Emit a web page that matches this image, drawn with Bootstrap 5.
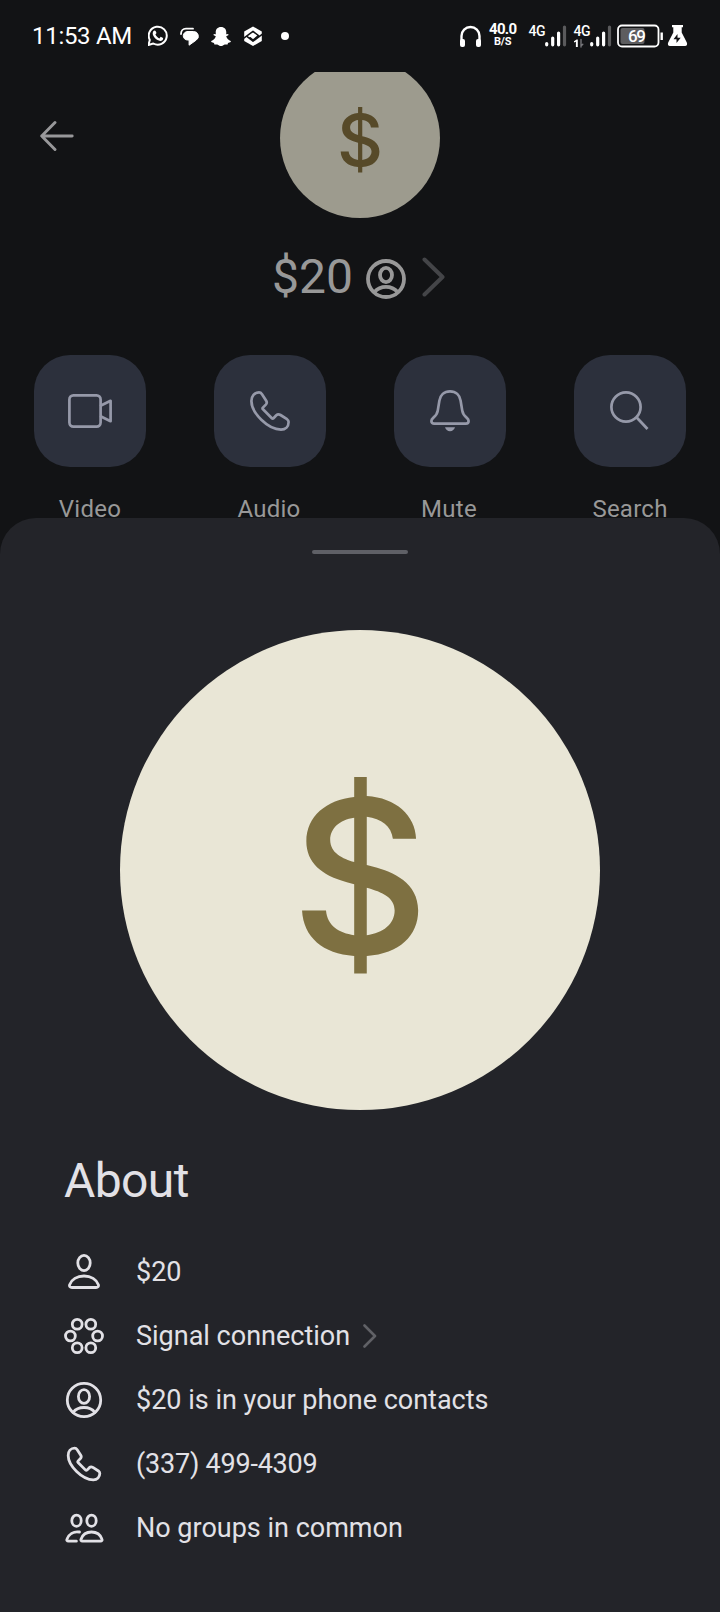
<!DOCTYPE html>
<html lang="en" data-bs-theme="dark">
<head>
<meta charset="utf-8">
<meta name="viewport" content="width=device-width, initial-scale=1">
<title>Contact details</title>
<link href="https://cdn.jsdelivr.net/npm/bootstrap@5.3.0/dist/css/bootstrap.min.css" rel="stylesheet">
<style>
  body { font-family: Roboto, "Noto Sans", sans-serif; background: #121315; width: 720px; height: 1612px; overflow: hidden; }
  svg { display: block; flex: none; fill: none; stroke-linecap: round; stroke-linejoin: round; }
  .statusbar { height: 72px; color: #fff; padding: 0 31px 0 32px; }
  .clock { font-size: 24px; line-height: 28px; letter-spacing: -.3px; width: 116px; white-space: nowrap; }
  .profile { height: 446px; color: #989898; }
  .topbar { height: 146px; padding-left: 40px; overflow: hidden; }
  .topbar .side { width: 240px; padding-top: 48px; }
  .avatar-sm { width: 160px; height: 160px; margin-top: -14px; }
  .contact-name { height: 60px; margin-top: 29px; font-size: 48px; line-height: 60px; padding-left: 272px; }
  .name-icon { margin: 4px 0 0 13px; }
  .name-chev { margin-left: 16px; }
  .actions { margin-top: 48px; padding: 0 34px; }
  .action { width: 112px; }
  .tile { width: 112px; height: 112px; border-radius: 36px; background: #2c303c; }
  .tile svg { stroke: #9699a9; stroke-width: 2.7; }
  .action-label { font-size: 24px; line-height: 24px; letter-spacing: .25px; margin-top: 30px; white-space: nowrap; }
  .action-label.nudge { margin-left: -2px; }
  .sheet { height: 1094px; background: #232429; border-radius: 36px 36px 0 0; color: #e2e1e6; position: relative; }
  .handle { width: 96px; height: 4px; border-radius: 2px; background: #5f6066; margin-top: 32px; }
  .avatar-lg { width: 480px; height: 480px; margin-top: 76px; }
  .about-title { font-size: 48px; line-height: 60px; font-weight: 400; letter-spacing: -.6px; color: #e2e1e6; margin: 41px 0 0 64px; }
  .facts { margin-top: 29px; padding-left: 64px; }
  .fact { height: 64px; font-size: 27px; }
  .fact-icon { width: 72px; }
  .fact-icon svg { stroke: #e2e1e6; stroke-width: 2.8; overflow: visible; }
  .fact-chev { margin-left: 13px; }
  .phone-number { letter-spacing: -.22px; }
</style>
</head>
<body>
<header class="statusbar d-flex align-items-center">
  <span class="clock">11:53 AM</span>
  <svg width="150" height="28" viewBox="149 22 150 28">
    <path d="M149.400 45l1.400-5.100a9 9 0 1 1 3.500 3.600z" stroke="#fff" stroke-width="2"/>
    <path d="M154.300 31.200c.8-1 1.900-1 2.300-.1l.9 2-1.100 1.500c1 1.900 2.200 3 4 3.800l1.300-1.600 2.400 1.200c.4 1.800-1.300 3-2.900 3-3.500-.3-7.600-4.600-7.500-7.400.1-.9.2-1.700.6-2.400z" fill="#fff"/>
    <path d="M182 34c0-3 2-5.300 5-5.300h7" stroke="#fff" stroke-width="1.800"/>
    <path d="M188.500 31.500h6a4.700 4.700 0 0 1 2.600 8.700l-7 5V40h-1.600a4.250 4.250 0 0 1 0-8.500z" fill="#fff" stroke="#fff"/>
    <path d="M222 27c3.500 0 5.300 2.300 5.300 5.300l-.1 2 2.200-.3-.1 1.300-2.100 1c.8 2.400 2.500 4 4.500 4.600l.1 1.200-2.800.9-.4 1.500-2.900-.1c-1.300.6-2.200 1.600-3.700 1.600s-2.400-1-3.700-1.600l-2.900.1-.4-1.500-2.800-.9.1-1.200c2-.6 3.700-2.200 4.500-4.600l-2.100-1-.1-1.300 2.200.3-.1-2c0-3 1.800-5.300 5.300-5.300z" fill="#fff"/>
    <path d="M254 26.500l8.800 5v9.500L254 46l-8.800-5v-9.500z" fill="#fff"/>
    <path d="M244.500 38.300l9.500-7 5.500 4.400-5.500 4.400-3-2.400M263.500 34.200l-9.500 7-5.500-4.400" stroke="#121315" stroke-width="1.500"/>
    <circle cx="286" cy="36" r="4" fill="#fff"/>
  </svg>
  <svg class="ms-auto" width="229" height="30" viewBox="461 21 229 30" font-family="Roboto" fill="#fff">
    <path d="M462.500 42v-6a9 9 0 0 1 18 0v6" stroke="#fff" stroke-width="2.400"/>
    <rect x="461" y="39" width="5" height="8" rx="2" fill="#fff"/><rect x="477" y="39" width="5" height="8" rx="2" fill="#fff"/>
    <g fill="#fff">
      <text x="490" y="34" font-size="15" font-weight="700" textLength="28">40.0</text>
      <text x="495" y="45" font-size="11" font-weight="700" textLength="17.500">B/S</text>
      <text x="529.500" y="36" font-size="14" font-weight="500" textLength="17">4G</text>
      <text x="574.500" y="36" font-size="14" font-weight="500" textLength="17">4G</text>
      <path d="M575 41.200l2.600-1.700h1.200V47h-1.900v-5.300l-1.900.8z"/>
      <path d="M582 39.500v7.500m0-1l1.800-1.800" stroke="#77777b" stroke-width="1.400"/>
    </g>
    <g stroke="#fff" stroke-width="3.200">
      <path d="M547.700 43.500v1.300M553.700 38v6.800M559.600 33v11.800M592.700 43.500v1.300M598.700 38v6.800M604.600 33v11.800"/>
      <path d="M565.500 27v17.800M610.500 27v17.800" stroke="#5a5a5c"/>
    </g>
    <rect x="619" y="25.500" width="40.500" height="21" rx="4" stroke="#fff" stroke-width="1.800"/>
    <rect x="621.500" y="28" width="24" height="16" rx="2" fill="#5d5d5f"/>
    <path d="M662.700 32.500v7.500" stroke="#fff" stroke-width="2.400" stroke-linecap="butt"/>
    <text x="629" y="42" font-size="17" font-weight="500" fill="#fff" textLength="18">69</text>
    <path d="M673 25h11v2.200h-1.300v5.300l5.100 10c.8 1.900.1 3.500-1.800 3.500h-15c-1.900 0-2.600-1.600-1.800-3.500l5.100-10v-5.300H673z" fill="#fff"/>
    <path d="M678.500 34l-4 5.300h3V43l4.200-5.300h-3.200z" fill="#121315"/>
  </svg>
</header>

<main class="profile">
  <div class="topbar d-flex">
    <div class="side"><svg width="34" height="32" viewBox="0 0 34 32"><path d="M15 2.500L1.700 16 15 29.500M1.700 16h30.500" stroke="#98989a" stroke-width="2.900"/></svg></div>
    <svg class="avatar-sm" viewBox="0 0 480 480"><clipPath id="trim"><rect x="100" y="147" width="280" height="196.500"/></clipPath><circle cx="240" cy="240" r="240" fill="#9d9b8e"/><text x="240" y="324" clip-path="url(#trim)" text-anchor="middle" font-family="Inter" font-size="214" font-weight="500" fill="#574a29">$</text></svg>
  </div>
  <div class="contact-name d-flex align-items-center">
    <span>$20</span>
    <svg class="name-icon" width="40" height="40" viewBox="0 0 40 40" stroke="#989898" stroke-width="3.800"><circle cx="20" cy="20" r="18"/><ellipse cx="20" cy="16" rx="6" ry="7.200"/><path d="M8.500 33c3-3.600 7-5.200 11.500-5.200s8.500 1.600 11.500 5.200"/></svg>
    <svg class="name-chev" width="24" height="40" viewBox="0 0 24 40"><path d="M2.500 2.500L20.500 20 2.500 37.500" stroke="#444548" stroke-width="4"/></svg>
  </div>
  <div class="actions d-flex justify-content-between">
    <div class="action d-flex flex-column align-items-center">
      <div class="tile d-flex align-items-center justify-content-center"><svg width="44" height="40" viewBox="0 0 44 40"><rect x="1.400" y="4.400" width="31.200" height="31.200" rx="4"/><path d="M33 14.500l9.600-4.700v20.400L33 25.500"/></svg></div>
      <span class="action-label">Video</span>
    </div>
    <div class="action d-flex flex-column align-items-center">
      <div class="tile d-flex align-items-center justify-content-center"><svg width="40" height="40" viewBox="0 0 40 40"><path id="handset" d="M9 1.400C4.500 1.400 1.400 5 1.400 10 1.400 22 18 38.600 31 38.600c4.500 0 7.600-3.100 7.600-7.600 0-1.500-.6-2-1.600-2.800L30.500 24c-1.500-.8-3-.8-4.200.3l-2.800 2.900c-.5.5-1.100.5-1.600 0L13 18.300c-.6-.6-.6-1.100-.1-1.700l2.900-3c1.200-1.300 1.200-2.600.4-3.900L12 3.200C11.200 2 10.300 1.400 9 1.400z"/></svg></div>
      <span class="action-label nudge">Audio</span>
    </div>
    <div class="action d-flex flex-column align-items-center">
      <div class="tile d-flex align-items-center justify-content-center"><svg width="40" height="42" viewBox="0 -1 40 42"><path d="M20 .4c6 0 9.800 4 10.600 9.200l1.600 9.800c.5 3.300 1.600 5.200 4.600 7.500 1.100.9 1.800 1.900 1.800 3.100 0 1.700-1.200 2.600-2.700 2.600H4.100c-1.500 0-2.700-.9-2.700-2.600 0-1.200.7-2.200 1.800-3.100 3-2.300 4.100-4.200 4.600-7.500l1.600-9.800C10.200 4.400 14 .4 20 .4z"/><path d="M15 36.300h10c-.6 2.400-2.500 3.900-5 3.900s-4.400-1.500-5-3.900z" fill="#9699a9" stroke="none"/></svg></div>
      <span class="action-label nudge">Mute</span>
    </div>
    <div class="action d-flex flex-column align-items-center">
      <div class="tile d-flex align-items-center justify-content-center"><svg width="40" height="40" viewBox="0 0 40 40"><circle cx="16" cy="16" r="14.600"/><path d="M26.700 26.500l10.800 11.500" stroke-linecap="butt"/></svg></div>
      <span class="action-label">Search</span>
    </div>
  </div>
</main>

<section class="sheet d-flex flex-column">
  <div class="handle align-self-center"></div>
  <svg class="avatar-lg align-self-center" viewBox="0 0 480 480"><circle cx="240" cy="240" r="240" fill="#e9e6d6"/><text x="240" y="324" clip-path="url(#trim)" text-anchor="middle" font-family="Inter" font-size="214" font-weight="500" fill="#7e7041">$</text></svg>
  <h1 class="about-title">About</h1>
  <ul class="facts list-unstyled mb-0">
    <li class="fact d-flex align-items-center"><span class="fact-icon"><svg width="40" height="36" viewBox="0 0 40 36"><ellipse cx="20" cy="9" rx="6.200" ry="7.600"/><path d="M8 33.500c-2 0-3-1.200-2.400-2.800C7.500 25.500 13 22 20 22s12.500 3.500 14.400 8.700c.6 1.600-.4 2.800-2.400 2.800z"/></svg></span><span>$20</span></li>
    <li class="fact d-flex align-items-center"><span class="fact-icon"><svg width="40" height="36" viewBox="0 0 40 36"><circle cx="13.200" cy="6.200" r="4.900"/><circle cx="26.800" cy="6.200" r="4.900"/><circle cx="6.400" cy="18" r="4.900"/><circle cx="33.600" cy="18" r="4.900"/><circle cx="13.200" cy="29.800" r="4.900"/><circle cx="26.800" cy="29.800" r="4.900"/></svg></span><span>Signal connection</span><svg class="fact-chev" width="14" height="24" viewBox="0 0 14 24"><path d="M1.500 1.500L12 12 1.500 22.500" stroke="#606166" stroke-width="2.600"/></svg></li>
    <li class="fact d-flex align-items-center"><span class="fact-icon"><svg width="40" height="36" viewBox="0 0 40 36"><circle cx="20" cy="18" r="16.700"/><ellipse cx="20" cy="14.500" rx="5.600" ry="6.800"/><path d="M9 30.500c2.500-3.300 6.500-5 11-5s8.500 1.700 11 5"/></svg></span><span>$20 is in your phone contacts</span></li>
    <li class="fact d-flex align-items-center"><span class="fact-icon"><svg width="40" height="34" viewBox="0 0 40 34"><use href="#handset" transform="translate(3 0) scale(.85)" stroke-width="3.300"/></svg></span><span class="phone-number">(337) 499-4309</span></li>
    <li class="fact d-flex align-items-center"><span class="fact-icon"><svg width="40" height="30" viewBox="0 0 40 30"><ellipse cx="12.500" cy="7.700" rx="4.700" ry="5.600"/><ellipse cx="27.500" cy="7.700" rx="4.700" ry="5.600"/><path d="M18.500 28.200c-1.500 0-2-1-1.500-2 1.500-4.200 5.500-7.200 10.500-7.200s9 3 10.500 7.200c.4 1-.1 2-1.500 2zM15.500 19c-6-1-10.800 2.200-12.600 7.200-.4 1 .1 2 1.500 2h8"/></svg></span><span>No groups in common</span></li>
  </ul>
</section>
<script src="https://cdn.jsdelivr.net/npm/bootstrap@5.3.0/dist/js/bootstrap.bundle.min.js"></script>
</body>
</html>
